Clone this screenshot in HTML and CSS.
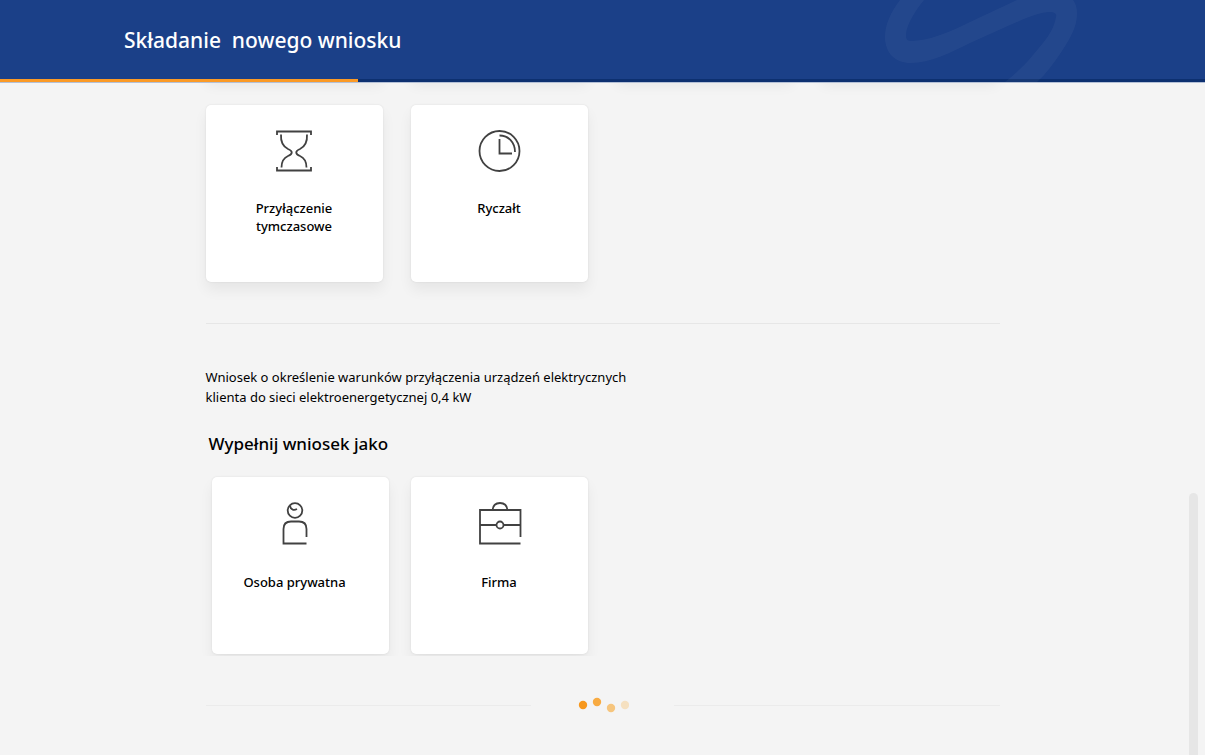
FILE: index.html
```
<!DOCTYPE html>
<html lang="pl">
  <head>
    <meta charset="utf-8">
    <title>Składanie nowego wniosku</title>
    <link rel="stylesheet" href="styles.css">
  </head>
  <body>
    <header class="header">
      <h1 class="header-title">Składanie&nbsp; nowego wniosku</h1>
      <div class="progress"><div class="progress-value" style="width: 29.7%"></div></div>
      <svg class="header-swirl" width="220" height="82" viewBox="0 0 220 82" aria-hidden="true">
        <path d="M40 0C31 12 25 24 25 37C25 53 35 63 51 63C70 63 90 53 110 43L150 25C166 18 180 12 190 12C195 12 197 14 196 17C194 31 184 42 173 55C165 65 155 74 145 82H177C186 74 193 64 200 54C210 39 217 27 217 14C217 8 216 4 213 0H157L110 22C90 32 68 41 51 41C46 41 46 38 46 34C47 24 55 11 64 0Z"/>
      </svg>
    </header>

    <main class="content">
      <div class="cards cards-previous">
        <div class="card-edge"></div>
        <div class="card-edge"></div>
        <div class="card-edge"></div>
        <div class="card-edge"></div>
      </div>

      <div class="cards">
        <button class="card" type="button">
          <svg class="icon" width="44" height="44" viewBox="0 0 44 44">
            <path d="M5 6V2.500H39V6M5 38V41.500H39V38"/>
            <path d="M9 5.500C8.500 14 12 18 16 20C21 22 21 25 16 27C11.500 29 9.500 32 9.500 38.500M35 5.500C35.500 14 32 18 28 20C23 22 23 25 28 27C32.500 29 34.500 32 34.500 38.500"/>
          </svg>
          <span class="card-label">Przyłączenie tymczasowe</span>
        </button>
        <button class="card" type="button">
          <svg class="icon" width="44" height="44" viewBox="0 0 44 44">
            <circle cx="22.500" cy="22" r="20"/>
            <path d="M22.500 10V24.500H35M22.500 6.500C31.500 6.500 38 13.500 38 23"/>
          </svg>
          <span class="card-label">Ryczałt</span>
        </button>
      </div>

      <hr class="line">

      <p class="description">Wniosek o określenie warunków przyłączenia urządzeń elektrycznych<br>klienta do sieci elektroenergetycznej 0,4 kW</p>
      <h2 class="subtitle">Wypełnij wniosek jako</h2>

      <div class="cards cards-applicant">
        <button class="card card-private" type="button">
          <svg class="icon" width="44" height="44" viewBox="0 0 44 44">
            <circle cx="22" cy="8.500" r="7.300"/>
            <path d="M17 4C18 8 21 8.500 24 7M33.500 35V27C33.500 22 31 19.500 26 19.500H18C13 19.500 10.500 22 10.500 27V41.500H33.500"/>
          </svg>
          <span class="card-label">Osoba prywatna</span>
        </button>
        <button class="card" type="button">
          <svg class="icon" width="45" height="44" viewBox="0 0 45 44">
            <path d="M15.500 8C16 3.500 19 1 23 1S30 3.500 30.500 8M43.500 35V8H3V41.500H43.500M3 23H19.500M26.500 23H43.500"/>
            <circle cx="23" cy="23" r="3.500"/>
          </svg>
          <span class="card-label">Firma</span>
        </button>
      </div>

      <div class="loader">
        <hr class="loader-line">
        <svg class="loader-dots" width="52" height="16" viewBox="0 0 52 16">
          <circle cx="6" cy="8" r="4.200" fill="#f7981d"/>
          <circle cx="20" cy="5" r="4.200" fill="#f8ab42"/>
          <circle cx="34" cy="11" r="4.200" fill="#f6c57d"/>
          <circle cx="48" cy="8" r="4.200" fill="#f5e0c0"/>
        </svg>
        <hr class="loader-line">
      </div>
    </main>

    <div class="scroll-thumb"></div>
  </body>
</html>
```

FILE: styles.css
```
* {
  box-sizing: border-box;
}

body {
  margin: 0;
  min-height: 100vh;
  background-color: #f4f4f4;
  color: #000;
  font-family: "Noto Sans", "Open Sans", sans-serif;
  overflow: hidden;
}

.header {
  position: relative;
  z-index: 1;
  background-color: #1b4088;
  border-bottom: 1px solid #b4c0d6;
}

.header-title {
  margin: 0;
  padding: 24px 124px 23px;
  color: #fff;
  font-size: 21px;
  font-weight: 500;
  line-height: 32px;
}

.progress {
  height: 3px;
  background-color: #0d3070;
}

.progress-value {
  height: 3px;
  background-color: #fb9a26;
}

.header-swirl {
  position: absolute;
  right: 125px;
  top: 0;
  fill: #fff;
  fill-opacity: 0.04;
}

.content {
  max-width: 794px;
  margin: 0 auto;
}

.cards {
  display: grid;
  grid-template-columns: repeat(4, 177px);
  gap: 28px;
}

/* bottom edge of the row scrolled under the header */
.cards-previous {
  margin: -24px 0 28px;
}

.card-edge {
  height: 18px;
  border-radius: 5px;
  box-shadow: 0 8px 14px rgba(0, 0, 0, 0.06);
}

.card {
  display: flex;
  flex-direction: column;
  align-items: center;
  height: 177px;
  padding: 24px 32px 0;
  border: 0;
  border-radius: 5px;
  background-color: #fff;
  box-shadow: 0 0 2px rgba(0, 0, 0, 0.1), 0 8px 14px rgba(0, 0, 0, 0.06);
  color: #000;
  font-family: inherit;
  font-size: 13px;
  font-weight: 500;
  line-height: 18px;
  cursor: pointer;
}

.icon {
  margin-bottom: 26px;
  fill: none;
  stroke: #414141;
  stroke-width: 1.8;
}

.line {
  height: 1px;
  margin: 41px 0 43px;
  border: 0;
  background-color: #e6e6e6;
}

.description {
  margin: 0;
  font-size: 13px;
  line-height: 20px;
}

.subtitle {
  margin: 24px 3px 20px;
  font-size: 17px;
  font-weight: 500;
  line-height: 26px;
}

.cards-applicant {
  column-gap: 22px;
  padding: 0 0 2px 6px;
  clip-path: inset(-20px -20px 0);
}

.cards-applicant .icon {
  margin-top: 1px;
  margin-bottom: 27px;
}

.card-private {
  padding: 24px 32px 0 21px;
}

.loader {
  display: flex;
  align-items: center;
  justify-content: space-between;
  margin-top: 41px;
}

.loader-line {
  width: 41%;
  height: 1px;
  margin: 0;
  border: 0;
  background-color: #ebebeb;
}

.scroll-thumb {
  position: fixed;
  right: 7px;
  top: 493px;
  bottom: -8px;
  width: 9px;
  border-radius: 5px;
  background-color: #e6e6e6;
}
```
